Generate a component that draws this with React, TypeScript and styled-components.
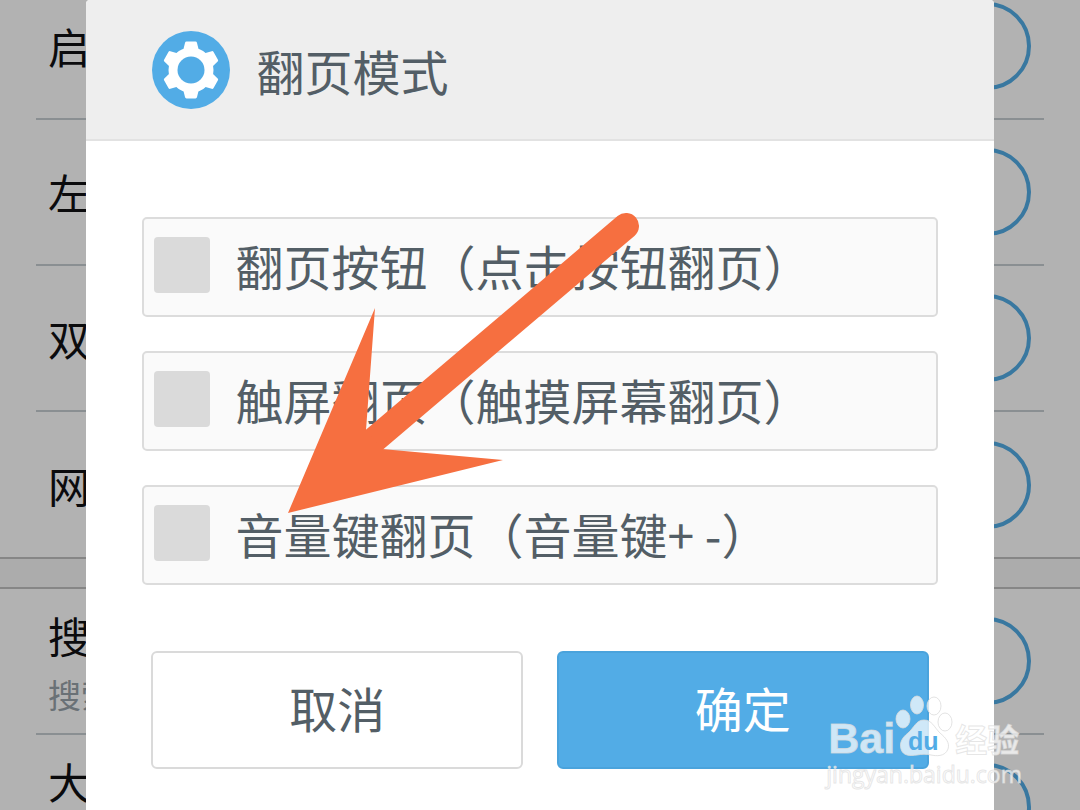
import React from 'react';
import styled, { createGlobalStyle } from 'styled-components';

const Global = createGlobalStyle`
  * { box-sizing: border-box; }
  body {
    margin: 0;
    overflow: hidden;
    background: #fff;
    font-family: "Noto Sans CJK SC", sans-serif;
  }
`;

const Screen = styled.div`
  position: relative;
  height: 100vh;
  overflow: hidden;
`;

/* The settings page is scrolled a little, so its first row is cut off. */
const Settings = styled.ul`
  margin: -26px 0 0;
  padding: 0;
  list-style: none;
`;

const Setting = styled.li<{ $last?: boolean }>`
  display: flex;
  align-items: center;
  justify-content: space-between;
  height: ${(p) => (p.$last ? 145 : 146)}px;
  margin: 0 36px;
  padding: 0 13px 0 12px;
  border-bottom: ${(p) => (p.$last ? 'none' : '2px solid #c6cdd2')};
`;

const Divider = styled.li`
  height: 32px;
  background: #f7f7f7;
  border: solid #c0c0c0;
  border-width: 2px 0;
`;

const SettingText = styled.div<{ $tall?: boolean }>`
  display: flex;
  flex-direction: column;
  gap: 8px;
  min-height: ${(p) => (p.$tall ? 114 : 54)}px;
  padding-top: ${(p) => (p.$tall ? 4 : 0)}px;
`;

const SettingName = styled.span`
  font-size: 42px;
  line-height: 54px;
  color: #101014;
`;

const SettingNote = styled.span`
  font-size: 33px;
  line-height: 48px;
  color: #99a3aa;
`;

const Switch = styled.input`
  appearance: none;
  flex: none;
  width: 88px;
  height: 88px;
  margin: 0;
  border: 4px solid #52ace6;
  border-radius: 50%;
`;

const Overlay = styled.div`
  position: absolute;
  inset: 0;
  padding: 0 8%;
  background: rgba(0, 0, 0, 0.3);
`;

const Dialog = styled.form`
  min-height: 100%;
  background: #fff;
  border-radius: 4px 4px 0 0;
  overflow: hidden;
`;

const Header = styled.header`
  display: flex;
  align-items: center;
  gap: 26px;
  height: 141px;
  padding: 0 66px;
  background: #eee;
  border-bottom: 2px solid #e2e2e2;
`;

const Title = styled.h1`
  margin: 0;
  font-size: 48px;
  line-height: 64px;
  font-weight: 400;
  color: #535e66;
`;

const Body = styled.div`
  padding: 76px 56px 40px;
`;

const Options = styled.div`
  display: flex;
  flex-direction: column;
  gap: 34px;
`;

const Option = styled.label`
  display: flex;
  align-items: center;
  gap: 25px;
  height: 100px;
  padding: 0 10px 4px;
  background: #fafafa;
  border: 2px solid #dcdcdc;
  border-radius: 5px;
  font-size: 48px;
  line-height: 64px;
  color: #535e66;
  white-space: nowrap;
`;

const Tick = styled.input`
  appearance: none;
  flex: none;
  width: 56px;
  height: 56px;
  margin: 0;
  background: #dadada;
  border-radius: 4px;
`;

const Actions = styled.div`
  display: grid;
  grid-template-columns: 1fr 1fr;
  gap: 34px;
  margin-top: 66px;
  padding: 0 9px;
`;

const Action = styled.button<{ $primary?: boolean }>`
  height: 118px;
  padding: 0 0 6px;
  font: inherit;
  font-size: 48px;
  color: ${(p) => (p.$primary ? '#fff' : '#535e66')};
  background: ${(p) => (p.$primary ? '#52ace6' : '#fff')};
  border: 2px solid ${(p) => (p.$primary ? '#4aa3dc' : '#dadada')};
  border-radius: 6px;
`;

const Arrow = styled.svg`
  position: absolute;
  left: 288px;
  top: 212px;
`;

const Watermark = styled.div`
  position: absolute;
  right: 58px;
  bottom: 20px;
  color: rgba(255, 255, 255, 0.72);
  -webkit-text-stroke: 1px rgba(220, 220, 220, 0.7);
`;

const Brand = styled.div`
  display: flex;
  align-items: flex-end;
  height: 64px;
  padding-left: 2px;
  font: 700 43px/40px "Liberation Sans", sans-serif;
`;

const BrandSuffix = styled.span`
  margin-left: 2px;
  font: 700 32px/40px "Noto Sans CJK SC", sans-serif;
`;

const Site = styled.div`
  font: 400 23px/32px "Open Sans", sans-serif;
`;

const Gear = () => (
  <svg width="78" height="78" viewBox="0 0 78 78" aria-hidden="true">
    <circle cx="39" cy="39" r="39" fill="#52ace6" />
    <g fill="#fff" stroke="#fff" strokeWidth="3" strokeLinejoin="round">
      {[0, 60, 120, 180, 240, 300].map((a) => (
        <path key={a} transform={`rotate(${a} 39 39)`} d="M34.500 12H43.500L45.500 20H32.500Z" />
      ))}
      <circle cx="39" cy="39" r="21" />
    </g>
    <circle cx="39" cy="39" r="13.500" fill="#52ace6" />
  </svg>
);

const PawDrawing = styled.svg`
  flex: none;
  -webkit-text-stroke: 0;
`;

const Paw = () => (
  <PawDrawing width="58" height="64" viewBox="0 0 58 64" aria-hidden="true">
    <g fill="rgba(255,255,255,0.72)" stroke="rgba(220,220,220,0.8)" strokeWidth="1">
      <ellipse cx="8" cy="25" rx="7" ry="9" />
      <ellipse cx="22" cy="11" rx="6.500" ry="9" />
      <ellipse cx="39" cy="12" rx="7" ry="9" />
      <ellipse cx="50" cy="28" rx="7" ry="9" />
      <path d="M29 26C37 26 39 33 45 39C51 44 55 49 53 55C50 63 41 62 36 61C31 60 27 60 22 61C15 62 8 62 6 55C4 48 8 43 13 39C19 34 21 26 29 26Z" />
    </g>
    <text x="13" y="56" fontFamily="Liberation Sans, sans-serif" fontWeight="700" fontSize="25" fill="#52ace6">
      du
    </text>
  </PawDrawing>
);

const options = ['翻页按钮（点击按钮翻页）', '触屏翻页（触摸屏幕翻页）', '音量键翻页（音量键+ -）'];

type RowProps = { name: string; note?: string; tall?: boolean; last?: boolean };

const Row = ({ name, note, tall, last }: RowProps) => (
  <Setting $last={last}>
    <SettingText $tall={tall}>
      <SettingName>{name}</SettingName>
      {note && <SettingNote>{note}</SettingNote>}
    </SettingText>
    <Switch type="checkbox" aria-label={name} />
  </Setting>
);

export default function App() {
  return (
    <>
      <Global />
      <Screen>
        <Settings>
          <Row name="启" />
          <Row name="左" />
          <Row name="双" />
          <Row name="网" last />
          <Divider />
          <Row name="搜" note="搜索" tall />
          <Row name="大" tall />
        </Settings>
        <Overlay>
          <Dialog role="dialog" aria-labelledby="dialog-title">
            <Header>
              <Gear />
              <Title id="dialog-title">翻页模式</Title>
            </Header>
            <Body>
              <Options>
                {options.map((text) => (
                  <Option key={text}>
                    <Tick type="checkbox" />
                    {text}
                  </Option>
                ))}
              </Options>
              <Actions>
                <Action type="button">取消</Action>
                <Action type="button" $primary>
                  确定
                </Action>
              </Actions>
            </Body>
          </Dialog>
        </Overlay>
        <Arrow width="352" height="301" viewBox="288 212 352 301" aria-hidden="true">
          <path d="M626 226L374 440" stroke="#f66f40" strokeWidth="26" strokeLinecap="round" />
          <path d="M288 513L375 308L366 430L382 449L503 460Z" fill="#f66f40" />
        </Arrow>
        <Watermark>
          <Brand>
            Bai
            <Paw />
            <BrandSuffix>经验</BrandSuffix>
          </Brand>
          <Site>jingyan.baidu.com</Site>
        </Watermark>
      </Screen>
    </>
  );
}
